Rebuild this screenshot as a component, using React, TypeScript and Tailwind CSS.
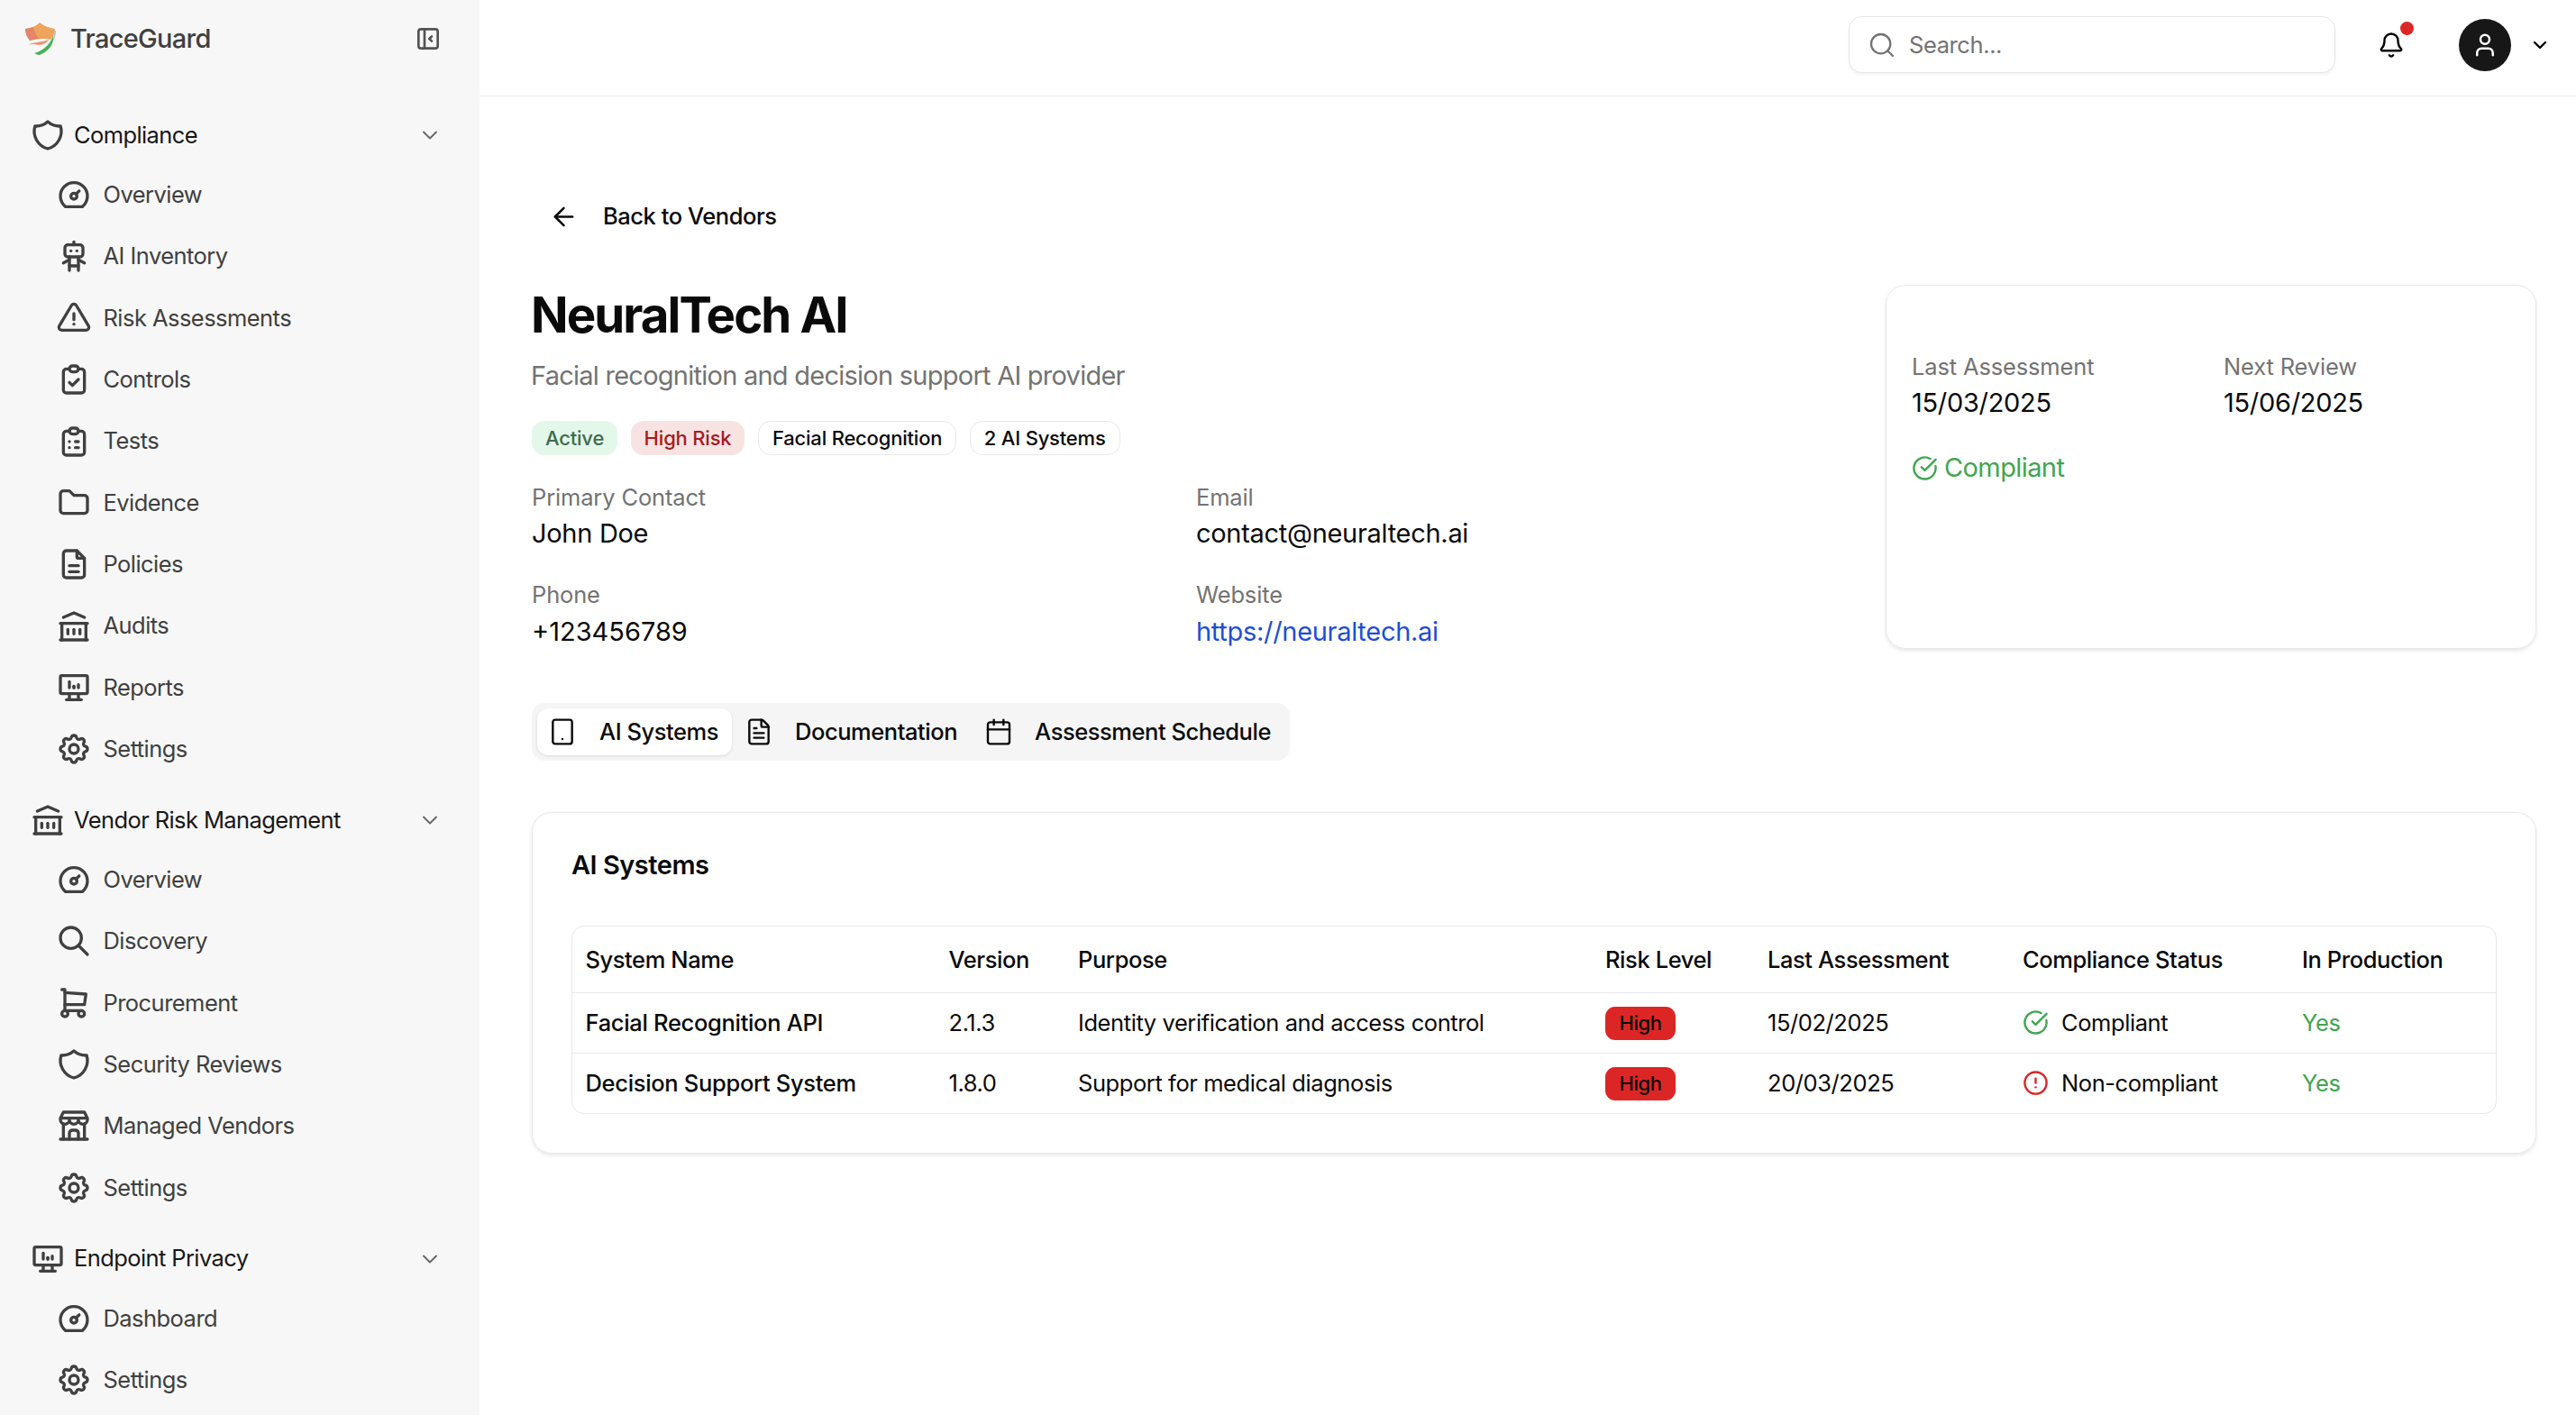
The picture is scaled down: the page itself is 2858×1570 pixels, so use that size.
import type { ReactNode } from "react";
import {
  TbShield, TbDashboard, TbRobot, TbAlertTriangle, TbClipboardCheck, TbClipboardList, TbFolder,
  TbFileDescription, TbBuildingBank, TbDeviceDesktopAnalytics, TbSettings, TbSearch,
  TbShoppingCart, TbBuildingStore, TbLayoutSidebarLeftCollapse, TbChevronDown,
} from "react-icons/tb";
import { ArrowLeft, Bell, Calendar, ChevronDown, CircleAlert, CircleCheckBig, FileText, Search, Tablet, User } from "lucide-react";

const SECTIONS = [
  {
    title: "Compliance",
    icon: TbShield,
    items: [
      { label: "Overview", icon: TbDashboard },
      { label: "AI Inventory", icon: TbRobot },
      { label: "Risk Assessments", icon: TbAlertTriangle },
      { label: "Controls", icon: TbClipboardCheck },
      { label: "Tests", icon: TbClipboardList },
      { label: "Evidence", icon: TbFolder },
      { label: "Policies", icon: TbFileDescription },
      { label: "Audits", icon: TbBuildingBank },
      { label: "Reports", icon: TbDeviceDesktopAnalytics },
      { label: "Settings", icon: TbSettings },
    ],
  },
  {
    title: "Vendor Risk Management",
    icon: TbBuildingBank,
    items: [
      { label: "Overview", icon: TbDashboard },
      { label: "Discovery", icon: TbSearch },
      { label: "Procurement", icon: TbShoppingCart },
      { label: "Security Reviews", icon: TbShield },
      { label: "Managed Vendors", icon: TbBuildingStore },
      { label: "Settings", icon: TbSettings },
    ],
  },
  {
    title: "Endpoint Privacy",
    icon: TbDeviceDesktopAnalytics,
    items: [
      { label: "Dashboard", icon: TbDashboard },
      { label: "Settings", icon: TbSettings },
    ],
  },
];

const ROWS = [
  { name: "Facial Recognition API", version: "2.1.3", purpose: "Identity verification and access control", date: "15/02/2025", ok: true },
  { name: "Decision Support System", version: "1.8.0", purpose: "Support for medical diagnosis", date: "20/03/2025", ok: false },
];

function Logo() {
  return (
    <svg width="36" height="36" viewBox="0 0 36 36" className="shrink-0 ml-[1px]">
      <path d="M1 7 C8 6 13 4 17 0 C22 4 28 6 34 7 C34 12 32 16 29 19 C22 17 14 18 6 20 C3 16 1 12 1 7Z" fill="#eda45c" />
      <path d="M1 7 C4 7 7 6 10 5 C11 10 13 15 17 18 C13 18 9 19 6 20 C3 16 1 12 1 7Z" fill="#e58468" />
      <path d="M4 25 C11 21 20 22 27 19 C24 24 17 26 11 24 C9 24 6 24 4 25Z" fill="#ee8f70" />
      <path d="M33 9 L35 9 C35 15 33 20 30 23 C32 19 33 14 33 9Z" fill="#b9c4bb" />
      <path d="M11 34 C20 32 28 25 32 15 C33 24 27 32 17 36 C15 36 13 35 11 34Z" fill="#44b254" />
    </svg>
  );
}

function Sidebar() {
  return (
    <aside className="w-[532px] h-full shrink-0 overflow-hidden bg-[#f7f7f7]">
      <div className="h-[86px] pl-[26px] pr-[41px] flex items-center justify-between">
        <div className="flex items-center gap-[15px]">
          <Logo />
          <span className="text-[29px] font-medium tracking-[-0.7px] text-[#404040]">TraceGuard</span>
        </div>
        <TbLayoutSidebarLeftCollapse size={32} className="text-[#525252]" />
      </div>
      <div className="pl-[33px] pr-[41px] pt-[32px]">
        {SECTIONS.map((s) => (
          <div key={s.title} className="mb-[12.5px]">
            <div className="h-[64px] flex items-center gap-[9px] text-[#171717]">
              <s.icon size={40} className="text-[#404040] shrink-0" />
              <span className="text-[25.5px] tracking-[-0.6px] flex-1">{s.title}</span>
              <TbChevronDown size={28} strokeWidth={1.6} className="text-[#666]" />
            </div>
            <div className="pl-[29px]">
              {s.items.map((it) => (
                <div key={s.title + it.label} className="h-[68.35px] flex items-center gap-[12.5px] text-[#404040]">
                  <it.icon size={40} className="shrink-0" />
                  <span className="text-[25.5px] tracking-[-0.55px]">{it.label}</span>
                </div>
              ))}
            </div>
          </div>
        ))}
      </div>
    </aside>
  );
}

function Topbar() {
  return (
    <header className="h-[107px] shrink-0 border-b border-[#ebebeb] flex items-center justify-end pr-[28px] pb-[7px]">
      <div className="w-[540px] h-[63px] flex items-center gap-[14px] pl-[20px] rounded-[14.5px] border border-[#e5e5e5] shadow-[0_2px_3px_rgba(0,0,0,0.05)] text-[#737373]">
        <Search size={32} strokeWidth={1.7} />
        <span className="text-[25.5px] tracking-[-0.4px] pt-[1px]">Search...</span>
      </div>
      <div className="relative ml-[47px] w-[30px] h-[30px] text-black">
        <Bell size={30} strokeWidth={1.9} />
        <span className="absolute -top-[11px] left-[25px] w-[15px] h-[15px] rounded-full bg-[#dc2626]" />
      </div>
      <div className="ml-[60px] w-[58px] h-[58px] rounded-full bg-[#171717] flex items-center justify-center text-white">
        <User size={30} />
      </div>
      <ChevronDown size={24} strokeWidth={2.4} className="ml-[20px] text-black" />
    </header>
  );
}

function Field({ label, children }: { label: string; children: ReactNode }) {
  return (
    <div>
      <div className="text-[25.5px] leading-[36.4px] tracking-[-0.15px] text-[#737373]">{label}</div>
      <div className="text-[29px] leading-[43.7px] tracking-[-0.3px] text-[#0a0a0a]">{children}</div>
    </div>
  );
}

function Chip({ className, children }: { className: string; children: ReactNode }) {
  return (
    <span className={"h-[38px] px-[15px] flex items-center rounded-[14px] text-[22px] font-medium tracking-[-0.2px] " + className}>{children}</span>
  );
}

function Main() {
  return (
    <main className="pl-[58px] pr-[44px]">
      <div className="h-[66px] mt-[100px] pl-[19px] flex items-center gap-[27px] text-[25.5px] font-medium tracking-[-0.45px] text-[#0a0a0a]">
        <ArrowLeft size={33} strokeWidth={1.8} />
        <span>Back to Vendors</span>
      </div>
      <div className="flex gap-[57px] mt-[43px]">
        <div className="w-[1445px]">
          <h1 className="text-[54.6px] leading-[72px] font-bold tracking-[-1.95px] text-[#0a0a0a] mt-[-3px] -ml-[1px]">NeuralTech AI</h1>
          <p className="text-[29px] leading-[44px] tracking-[-0.75px] text-[#737373] mt-[10px] -ml-[1px]">Facial recognition and decision support AI provider</p>
          <div className="flex gap-[14.5px] mt-[28px]">
            <Chip className="bg-[#e3f8ea] text-[#3f6b4f]">Active</Chip>
            <Chip className="bg-[#f8e3e3] text-[#a61c1c]">High Risk</Chip>
            <Chip className="border border-[#e8e8e8] text-[#0a0a0a]">Facial Recognition</Chip>
            <Chip className="border border-[#e8e8e8] text-[#0a0a0a]">2 AI Systems</Chip>
          </div>
          <div className="grid grid-cols-2 gap-x-[29px] gap-y-[28px] mt-[29px]">
            <Field label="Primary Contact">John Doe</Field>
            <Field label="Email">contact@neuraltech.ai</Field>
            <Field label="Phone"><span className="tracking-normal">+123456789</span></Field>
            <Field label="Website"><span className="text-[#1d4ed8]">https://neuraltech.ai</span></Field>
          </div>
        </div>
        <div className="w-[722px] h-[404px] rounded-[22px] border border-[#e8e8e8] shadow-[0_2px_4px_rgba(0,0,0,0.1)] pl-[28px] pt-[72px]">
          <div className="grid grid-cols-2 w-[692px]">
            <Field label="Last Assessment">15/03/2025</Field>
            <Field label="Next Review">15/06/2025</Field>
          </div>
          <div className="flex items-center gap-[7px] mt-[28px] text-[29px] leading-[44px] tracking-[-0.6px] text-[#3fa650]">
            <CircleCheckBig size={29} />
            <span>Compliant</span>
          </div>
        </div>
      </div>
      <div className="inline-flex mt-[58px] h-[64px] p-[6px] rounded-[14.5px] bg-[#f5f5f5] text-[25.5px] font-medium tracking-[-0.45px] text-[#0a0a0a]">
        <div className="w-[216px] flex items-center gap-[25px] pl-[12px] rounded-[12px] bg-white shadow-[0_1px_3px_rgba(0,0,0,0.12)]">
          <Tablet size={32} strokeWidth={1.8} className="shrink-0" /><span>AI Systems</span>
        </div>
        <div className="flex items-center gap-[24px] pl-[14px] pr-[15px]">
          <FileText size={32} strokeWidth={1.8} className="shrink-0" /><span>Documentation</span>
        </div>
        <div className="flex items-center gap-[24px] pl-[15px] pr-[15px]">
          <Calendar size={32} strokeWidth={1.8} className="shrink-0" /><span>Assessment Schedule</span>
        </div>
      </div>
      <section className="mt-[57px] h-[379px] rounded-[22px] border border-[#e8e8e8] shadow-[0_2px_4px_rgba(0,0,0,0.1)] px-[43px]">
        <h2 className="h-[125px] flex items-center pb-[10px] text-[29px] font-semibold tracking-[-0.5px] text-[#0a0a0a]">AI Systems</h2>
        <div className="rounded-[14px] border border-[#e8e8e8] overflow-hidden">
          <table className="w-full table-fixed border-collapse text-[25.5px] tracking-[-0.42px] text-[#0a0a0a]">
            <thead>
              <tr className="h-[73px] text-left font-medium">
                <th className="w-[403px] pl-[14.5px] pt-[1px] font-medium">System Name</th>
                <th className="w-[143.5px] pl-[14.5px] pt-[1px] font-medium">Version</th>
                <th className="w-[585px] pl-[14.5px] pt-[1px] font-medium">Purpose</th>
                <th className="w-[180px] pl-[14.5px] pt-[1px] font-medium">Risk Level</th>
                <th className="w-[283px] pl-[14.5px] pt-[1px] font-medium">Last Assessment</th>
                <th className="w-[310px] pl-[14.5px] pt-[1px] font-medium">Compliance Status</th>
                <th className="pl-[14.5px] pt-[1px] font-medium">In Production</th>
              </tr>
            </thead>
            <tbody>
              {ROWS.map((r) => (
                <tr key={r.name} className="h-[67px] border-t border-[#e8e8e8]">
                  <td className="pl-[14.5px] font-medium tracking-[-0.32px]">{r.name}</td>
                  <td className="pl-[14.5px]">{r.version}</td>
                  <td className="pl-[14.5px]">{r.purpose}</td>
                  <td className="pl-[14.5px]">
                    <span className="inline-flex h-[37px] w-[78px] items-center justify-center rounded-[11px] bg-[#dc2626] text-[22px] font-medium text-[#0a0a0a]">High</span>
                  </td>
                  <td className="pl-[14.5px]">{r.date}</td>
                  <td className="pl-[14.5px]">
                    <div className="flex items-center gap-[14px]">
                      {r.ok ? <CircleCheckBig size={29} className="text-[#3fa650]" /> : <CircleAlert size={29} className="text-[#dc2626]" />}
                      <span>{r.ok ? "Compliant" : "Non-compliant"}</span>
                    </div>
                  </td>
                  <td className="pl-[14.5px] text-[#3fa650]">Yes</td>
                </tr>
              ))}
            </tbody>
          </table>
        </div>
      </section>
    </main>
  );
}

export default function App() {
  return (
    <div className="w-[2858px] h-[1570px] flex overflow-hidden bg-white font-['Inter',sans-serif]">
      <Sidebar />
      <div className="flex-1 min-w-0 flex flex-col">
        <Topbar />
        <Main />
      </div>
    </div>
  );
}
